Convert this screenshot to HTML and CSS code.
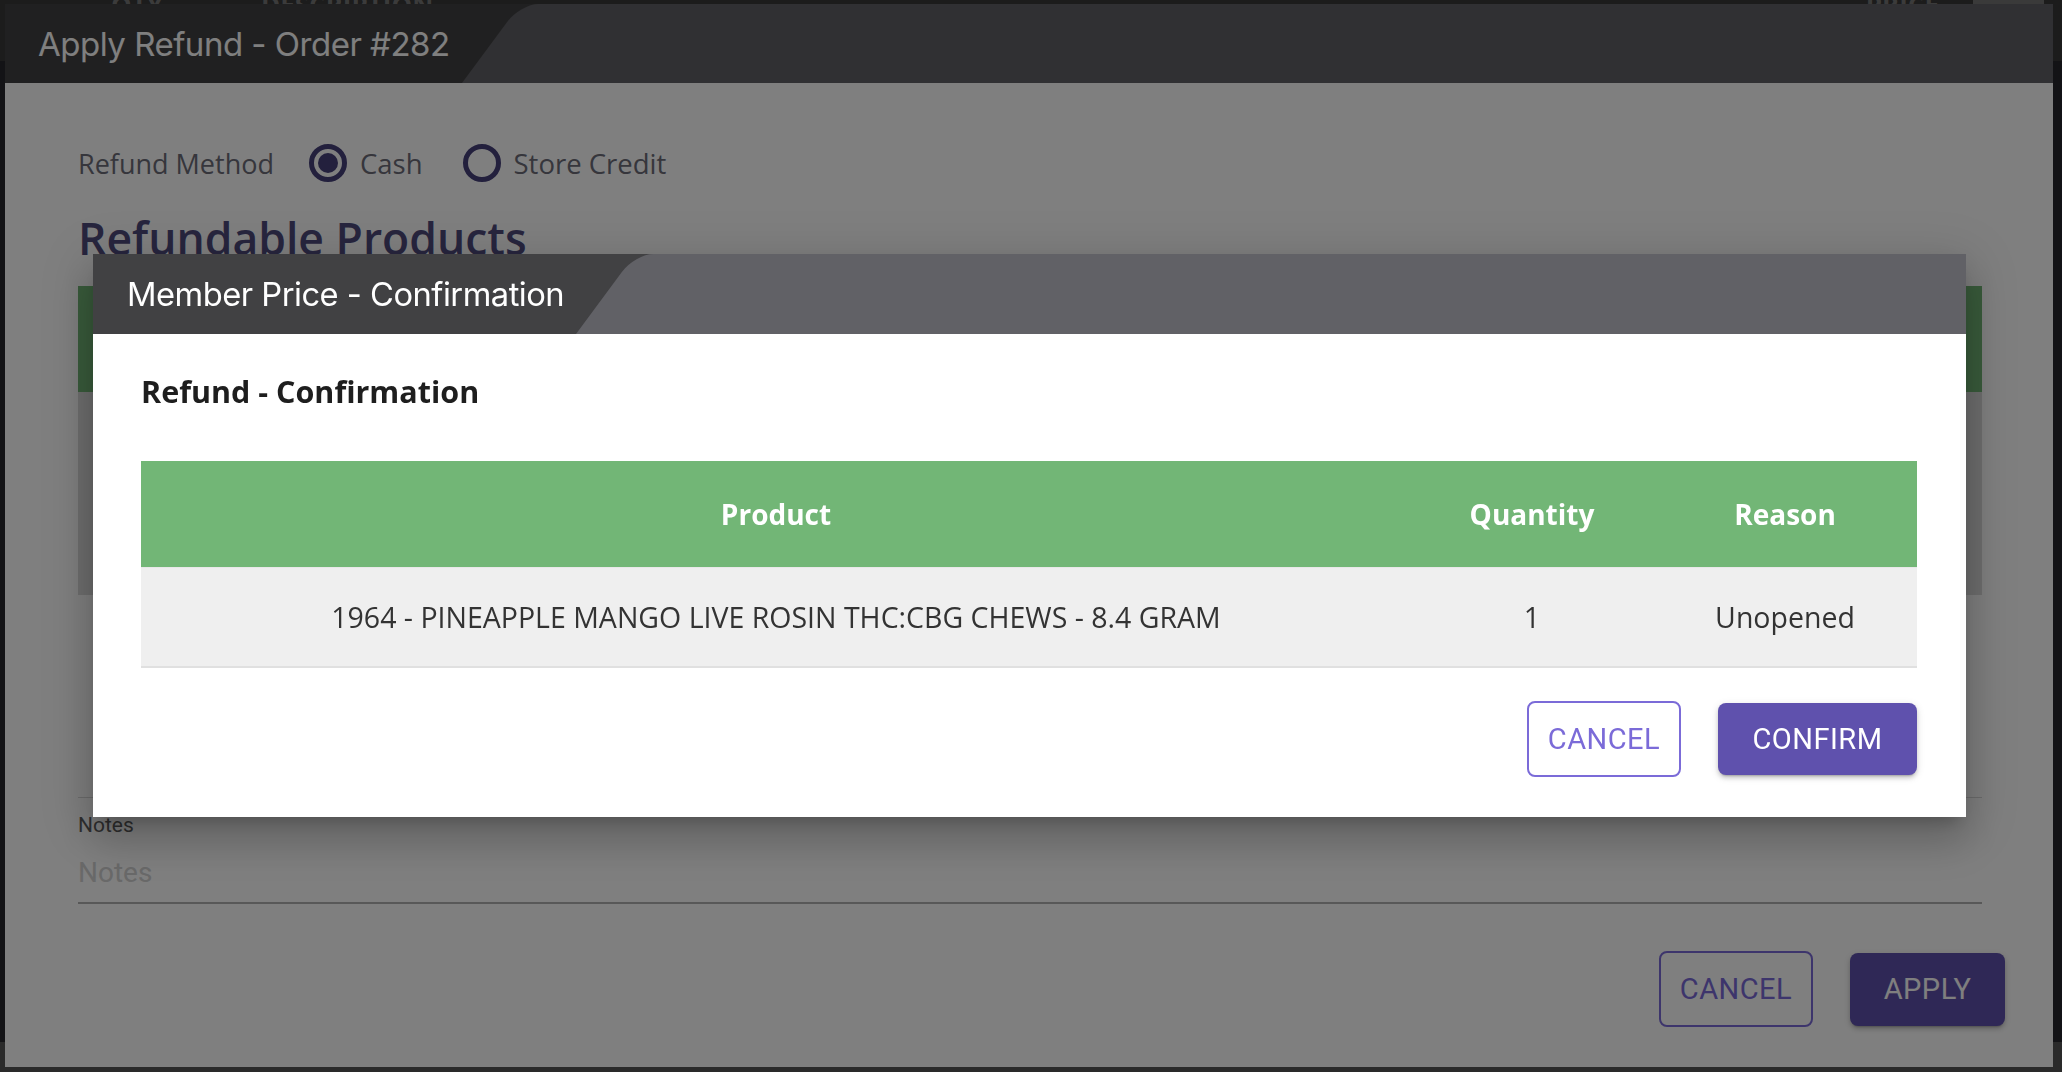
FILE: index.html
```html
<!DOCTYPE html>
<html lang="en">
<head>
    <meta charset="UTF-8">
    <meta name="viewport" content="width=device-width, initial-scale=1.0">
    <title>Apply Refund - Order #282</title>
    <link rel="stylesheet" href="styles.css">
</head>
<body>

<div class="page">
    <div class="page-head">
        <span class="head-qty">QTY</span>
        <span class="head-desc">DESCRIPTION</span>
        <span class="head-price">PRICE</span>
        <span class="head-btn"></span>
    </div>
    <div class="page-main"></div>
    <div class="page-foot"></div>
</div>

<div class="dialog">
    <div class="title-bar">
        <div class="title-tab">Apply Refund - Order #282</div>
        <div class="title-fill"></div>
    </div>

    <div class="dialog-body">
        <div class="method-row">
            <span class="method-label">Refund Method</span>
            <label class="radio"><span class="radio-circle checked"></span>Cash</label>
            <label class="radio"><span class="radio-circle"></span>Store Credit</label>
        </div>

        <h2 class="section-title">Refundable Products</h2>

        <div class="products">
            <div class="products-head"></div>
            <div class="products-row"></div>
        </div>

        <div class="other-field"></div>

        <div class="notes-field">
            <label class="notes-label" for="notes">Notes</label>
            <div class="notes-input" id="notes">Notes</div>
        </div>
    </div>

    <div class="dialog-actions">
        <button class="btn btn-outline">Cancel</button>
        <button class="btn btn-filled btn-apply">Apply</button>
    </div>
</div>

<div class="backdrop"></div>

<div class="modal">
    <div class="title-bar modal-bar">
        <div class="title-tab">Member Price - Confirmation</div>
        <div class="title-fill"></div>
    </div>

    <div class="modal-body">
        <h3 class="modal-heading">Refund - Confirmation</h3>

        <div class="confirm-table">
            <div class="ct-row ct-head">
                <span>Product</span>
                <span>Quantity</span>
                <span>Reason</span>
            </div>
            <div class="ct-row ct-item">
                <span>1964 - PINEAPPLE MANGO LIVE ROSIN THC:CBG CHEWS - 8.4 GRAM</span>
                <span>1</span>
                <span>Unopened</span>
            </div>
        </div>

        <div class="modal-actions">
            <button class="btn btn-outline">Cancel</button>
            <button class="btn btn-filled">Confirm</button>
        </div>
    </div>
</div>

</body>
</html>
```

FILE: styles.css
```css
* {
    box-sizing: border-box;
}

body {
    margin: 0;
    height: 100vh;
    overflow: hidden;
    background-color: #141417;
    font-family: "Open Sans", Arial, sans-serif;
}

/* page behind the dialogs */
.page {
    height: 100vh;
    display: flex;
    flex-direction: column;
}

.page-head {
    height: 61px;
    display: flex;
    padding-left: 111px;
    background-color: #383838;
    color: #767676;
    font-size: 26px;
    font-weight: 700;
    line-height: 10px;
}

.head-desc {
    margin-left: 98px;
}

.head-price {
    margin-left: auto;
}

.head-btn {
    width: 71px;
    height: 61px;
    margin: 0 18px 0 34px;
    background-color: #747474;
}

.page-main {
    flex: 1;
    background-color: #26262c;
}

.page-foot {
    height: 30px;
    background-color: #555;
}

/* outer dialog */
.dialog {
    position: absolute;
    top: 4px;
    left: 5px;
    width: 2048px;
    height: 1063px;
    background-color: #fff;
    display: flex;
    flex-direction: column;
}

.title-bar {
    height: 79px;
    flex-shrink: 0;
    display: flex;
    overflow: hidden;
    background-color: #414143;
}

.title-tab {
    width: 457px;
    flex-shrink: 0;
    padding-left: 33px;
    display: flex;
    align-items: center;
    color: #fff;
    font-family: Inter, "Open Sans", sans-serif;
    font-size: 33px;
    letter-spacing: -0.5px;
    white-space: nowrap;
}

.title-fill {
    flex: 1;
    position: relative;
}

.title-fill::before {
    content: "";
    position: absolute;
    top: 0;
    bottom: 0;
    left: 0;
    width: calc(100% + 90px);
    background-color: #616166;
    border-top-left-radius: 18px;
    transform: skewX(-36.5deg);
    transform-origin: bottom left;
}

.dialog-body {
    padding: 58px 71px 0 73px;
}

.method-row {
    height: 44px;
    display: flex;
    align-items: center;
    font-size: 27px;
    color: #6c6c78;
}

.method-label {
    margin-right: 35px;
}

.radio {
    display: flex;
    align-items: center;
    margin-right: 40px;
    font-size: 27.5px;
}

.radio-circle {
    width: 38px;
    height: 38px;
    margin-right: 13px;
    border: 5px solid #46407a;
    border-radius: 50%;
    display: flex;
    align-items: center;
    justify-content: center;
}

.radio-circle.checked::before {
    content: "";
    width: 20px;
    height: 20px;
    border-radius: 50%;
    background-color: #46407a;
}

.section-title {
    margin: 22px 0 18px;
    font-size: 44.5px;
    font-weight: 600;
    line-height: normal;
    color: #4f4b7c;
}

.products-head {
    height: 106px;
    background-color: #72b676;
}

.products-row {
    height: 203px;
    background-color: #dddddd;
}

.other-field {
    height: 203px;
    border-bottom: 1px solid #d8d8d8;
}

.notes-field {
    padding-top: 15px;
    font-family: Roboto, Arial, sans-serif;
}

.notes-label {
    display: block;
    font-size: 21px;
    line-height: normal;
    color: #5e5e5e;
}

.notes-input {
    margin-top: 19px;
    padding-bottom: 13px;
    border-bottom: 2px solid #b0b0b0;
    font-size: 28px;
    line-height: normal;
    color: #d2d2d2;
}

.dialog-actions {
    display: flex;
    align-items: center;
    justify-content: flex-end;
    gap: 37px;
    padding: 47px 48px 0 0;
}

/* buttons */
.btn {
    display: flex;
    align-items: center;
    justify-content: center;
    padding: 0;
    border-radius: 8px;
    font-family: Roboto, Arial, sans-serif;
    font-size: 29px;
    letter-spacing: 0.5px;
    text-transform: uppercase;
    cursor: pointer;
}

.btn-outline {
    width: 154px;
    height: 76px;
    background-color: #fff;
    border: 2px solid #7b6bd8;
    color: #7b6bd8;
}

.btn-filled {
    width: 199px;
    height: 72px;
    border: none;
    background-color: #5f51ad;
    color: #fff;
    box-shadow: 0 3px 2px -2px rgba(0, 0, 0, 0.2), 0 3px 4px 0 rgba(0, 0, 0, 0.14), 0 2px 8px 0 rgba(0, 0, 0, 0.12);
}

.btn-apply {
    width: 155px;
    height: 73px;
}

.backdrop {
    position: fixed;
    top: 0;
    right: 0;
    bottom: 0;
    left: 0;
    background-color: rgba(0, 0, 0, 0.5);
}

/* confirmation modal */
.modal {
    position: absolute;
    top: 254px;
    left: 93px;
    width: 1873px;
    background-color: #fff;
    box-shadow: 0 11px 15px -7px rgba(0, 0, 0, 0.2), 0 24px 38px 3px rgba(0, 0, 0, 0.14), 0 9px 46px 8px rgba(0, 0, 0, 0.12);
}

.modal-bar {
    height: 80px;
}

.modal-bar .title-tab {
    width: 483px;
    padding-left: 34px;
    font-size: 32.7px;
}

.modal-body {
    padding: 36px 49px 40px 48px;
}

.modal-heading {
    margin: 0 0 49px;
    font-size: 30.5px;
    font-weight: 700;
    line-height: normal;
    color: #1e1e1e;
}

.ct-row {
    display: grid;
    grid-template-columns: 1270px 242px 1fr;
    align-items: center;
    text-align: center;
    font-size: 28px;
}

.ct-head {
    height: 106px;
    background-color: #72b676;
    color: #fff;
    font-weight: 700;
}

.ct-item {
    height: 101px;
    background-color: #efefef;
    border-top: 1px solid #e8e8e8;
    border-bottom: 2px solid #e0e0e0;
    color: #333;
    font-size: 28.5px;
}

.modal-actions {
    display: flex;
    align-items: center;
    justify-content: flex-end;
    gap: 37px;
    margin-top: 33px;
}
```
